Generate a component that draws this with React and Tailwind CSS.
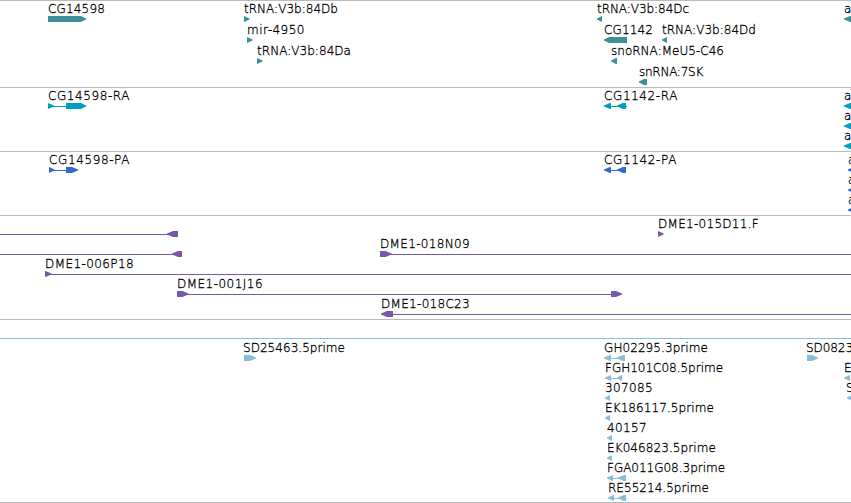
import React, { useLayoutEffect, useRef } from 'react';

// piece: [kind, start, end, headLength]
// kinds: r = block pointing right, l = block pointing left, n = intron line
const tracks = [
  {
    id: 'genes',
    color: '#3d9097',
    className: 'h-[87px] border-t border-[#bbbbbb]',
    laneClass: 'h-[21px]',
    lanes: [
      [
        { x: 48, w: 57, name: 'CG14598', parts: [['r', 48, 86, 5]] },
        { x: 244, w: 94, name: 'tRNA:V3b:84Db', parts: [['r', 244, 249.5, 5.5]] },
        { x: 597, w: 92, name: 'tRNA:V3b:84Dc', parts: [['l', 597, 602, 5]] },
        { x: 844, name: 'a', parts: [['l', 844, 856, 6]] },
      ],
      [
        { x: 247, w: 58, name: 'mir-4950', parts: [['r', 247, 252.5, 5.5]] },
        { x: 604, w: 49, name: 'CG1142', parts: [['l', 604, 627, 5]] },
        { x: 662, w: 94, name: 'tRNA:V3b:84Dd', parts: [['l', 662, 667, 5]] },
      ],
      [
        { x: 257, w: 94, name: 'tRNA:V3b:84Da', parts: [['r', 257, 262.5, 5.5]] },
        { x: 611, w: 113, name: 'snoRNA:MeU5-C46', parts: [['l', 611, 617, 5]] },
      ],
      [{ x: 639, w: 64, name: 'snRNA:7SK', parts: [['l', 639, 647, 5]] }],
    ],
  },
  {
    id: 'transcripts',
    color: '#009fbd',
    className: 'h-16 border-t border-[#bbbbbb]',
    laneClass: 'h-5',
    lanes: [
      [
        { x: 48, w: 82, name: 'CG14598-RA', parts: [['n', 50, 67], ['r', 48, 54, 6], ['r', 66, 86, 5]] },
        { x: 604, w: 74, name: 'CG1142-RA', parts: [['n', 606, 627], ['l', 604, 611, 6], ['l', 617, 626, 6]] },
        { x: 844, name: 'a', parts: [['l', 844, 856, 6]] },
      ],
      [{ x: 844, name: 'a', parts: [['l', 844, 856, 6]] }],
      [{ x: 844, name: 'a', parts: [['l', 844, 856, 6]] }],
    ],
  },
  {
    id: 'proteins',
    color: '#336bcc',
    className: 'h-16 border-t border-[#bbbbbb]',
    laneClass: 'h-5',
    lanes: [
      [
        { x: 49, w: 81, name: 'CG14598-PA', parts: [['n', 51, 67], ['r', 49, 54.5, 5.5], ['r', 66, 78, 6]] },
        { x: 604, w: 73, name: 'CG1142-PA', parts: [['n', 606, 620], ['l', 604, 611, 6], ['l', 617, 626, 6]] },
        { x: 848, name: 'a', parts: [['l', 848, 858, 6]] },
      ],
      [{ x: 848, name: 'a', parts: [['l', 848, 858, 6]] }],
      [{ x: 848, name: 'a', parts: [['l', 848, 858, 6]] }],
    ],
  },
  {
    id: 'clones',
    color: '#7657a9',
    className: 'h-[104px] border-t border-[#bbbbbb]',
    laneClass: 'h-5',
    lanes: [
      [
        { x: 0, parts: [['n', 0, 170], ['l', 167, 178, 6]] },
        { x: 658, w: 101, name: 'DME1-015D11.F', parts: [['r', 658, 663.5, 5.5]] },
      ],
      [
        { x: 0, parts: [['n', 0, 174], ['l', 172, 182, 6]] },
        { x: 380, w: 90, name: 'DME1-018N09', parts: [['n', 388, 851], ['r', 380, 391.5, 6]] },
      ],
      [{ x: 45, w: 89, name: 'DME1-006P18', parts: [['n', 48, 851], ['r', 45, 51.5, 6]] }],
      [{ x: 177, w: 86, name: 'DME1-001J16', parts: [['n', 185, 614], ['r', 177, 188.5, 6], ['r', 611, 622, 6]] }],
      [{ x: 381, w: 89, name: 'DME1-018C23', parts: [['n', 389, 851], ['l', 381, 393, 6]] }],
    ],
  },
  {
    id: 'ests',
    color: '#89bddc',
    className: 'mt-[18px] h-[165px] border-y border-t-[#88bbdd] border-b-[#bbbbbb] pt-px',
    laneClass: 'h-5',
    lanes: [
      [
        { x: 243, w: 102, name: 'SD25463.5prime', parts: [['r', 244, 256, 6]] },
        { x: 604, w: 104, name: 'GH02295.3prime', parts: [['n', 606, 620], ['l', 604, 611, 6], ['l', 617, 625, 6]] },
        { x: 806, w: 47, name: 'SD0823', parts: [['r', 807, 818, 6]] },
      ],
      [
        { x: 605, w: 118, name: 'FGH101C08.5prime', parts: [['n', 606, 620], ['l', 605, 611, 6], ['l', 617, 622, 5]] },
        { x: 844, name: 'E', parts: [['l', 844, 850, 6]] },
      ],
      [
        { x: 605, w: 48, name: '307085', parts: [['l', 605, 610, 5]] },
        { x: 846, name: 'S', parts: [['l', 847, 853, 6]] },
      ],
      [{ x: 605, w: 109, name: 'EK186117.5prime', parts: [['l', 605, 610, 5]] }],
      [{ x: 607, w: 40, name: '40157', parts: [['l', 607, 612, 5]] }],
      [{ x: 607, w: 109, name: 'EK046823.5prime', parts: [['l', 607, 612, 5]] }],
      [{ x: 607, w: 118, name: 'FGA011G08.3prime', parts: [['n', 608, 622], ['l', 607, 613, 6], ['l', 618, 626, 6]] }],
      [{ x: 608, w: 101, name: 'RE55214.5prime', parts: [['n', 610, 627], ['l', 608, 614, 6], ['l', 618, 626, 6]] }],
    ],
  },
];

// Label spread over the given width
const Label = ({ x, w, name }) => {
  const ref = useRef(null);

  useLayoutEffect(() => {
    const el = ref.current;
    if (!w) return;
    el.style.letterSpacing = '0px';
    const natural = el.getBoundingClientRect().width;
    el.style.letterSpacing = `${(w - natural) / name.length}px`;
  }, [w, name]);

  return (
    <span
      ref={ref}
      className="absolute top-0 whitespace-nowrap font-['DejaVu_Sans',sans-serif] text-[12px] font-extralight leading-4 text-black [-webkit-text-stroke:0.3px_black]"
      style={{ left: x }}
    >
      {name}
    </span>
  );
};

const Part = ({ part, origin }) => {
  const [kind, start, end, head] = part;
  const a = start - origin;
  const b = end - origin;
  if (kind === 'n') return <rect x={a} y="3" width={b - a} height="1" shapeRendering="crispEdges" />;
  if (kind === 'r') return <polygon points={`${a},0 ${b - head},0 ${b},2.5 ${b},3.5 ${b - head},6 ${a},6`} />;
  return <polygon points={`${b},0 ${a + head},0 ${a},2.5 ${a},3.5 ${a + head},6 ${b},6`} />;
};

const Feature = ({ feature, color }) => {
  const { x, parts } = feature;
  return (
    <>
      {feature.name && <Label x={x} w={feature.w} name={feature.name} />}
      <svg className="absolute top-[15px] h-1.5 w-px overflow-visible" style={{ left: x }} fill={color}>
        {parts.map((part, i) => (
          <Part key={i} part={part} origin={x} />
        ))}
      </svg>
    </>
  );
};

const Track = ({ track }) => (
  <section className={track.className}>
    {track.lanes.map((lane, i) => (
      <div key={i} className={`relative ${track.laneClass}`}>
        {lane.map((feature) => (
          <Feature key={feature.x} feature={feature} color={track.color} />
        ))}
      </div>
    ))}
  </section>
);

const App = () => (
  <main className="h-[503px] w-[851px] overflow-hidden bg-white">
    {tracks.slice(0, 4).map((track) => (
      <Track key={track.id} track={track} />
    ))}
    <div className="border-t border-[#bbbbbb]" />
    <Track track={tracks[4]} />
  </main>
);

export default App;
